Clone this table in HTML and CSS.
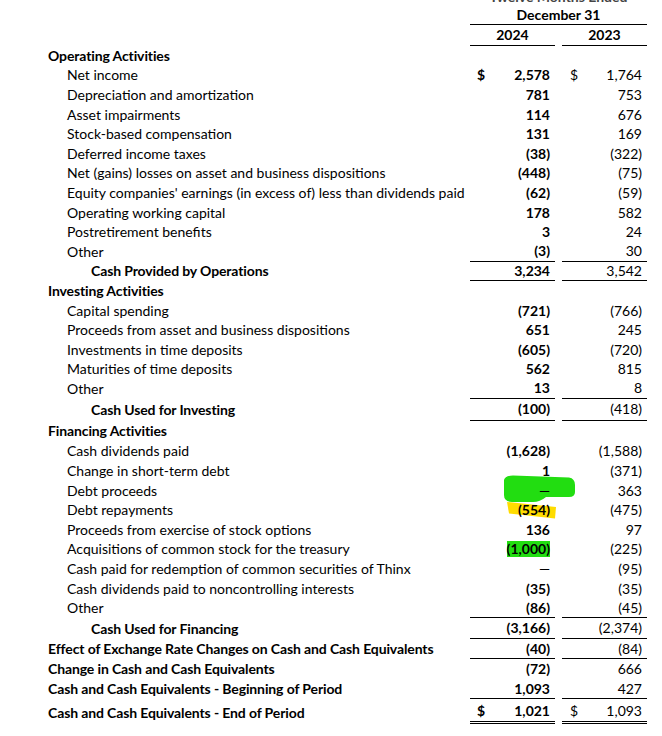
FILE: index.html
```html
<!DOCTYPE html>
<html>
<head>
<meta charset="utf-8">
<link rel="stylesheet" href="styles.css">
</head>
<body>
<svg class="marks" width="662" height="736" viewBox="0 0 662 736">
  <path class="green" d="M504,480 Q505,475.5 513,475.5 L569,477.5 Q575,478.5 575,485 L575,492 Q575,497 569,497 L546,497 Q540,502 533,502 L512,502 Q504,501.5 504,495 Z"/>
  <path class="yellow" d="M507,502 L556,507 L555,518.5 L509,513.5 Z"/>
</svg>
<div class="sheet">
  <div class="row ghost"><div class="lbl"></div><div class="span2"><span class="ghost-text">Twelve Months Ended</span></div></div>
  <div class="row hdr-a"><div class="lbl"></div><div class="span2 head">December 31</div></div>
  <div class="row hdr-b"><div class="lbl"></div><div class="v head">2024</div><div class="v head">2023</div></div>

  <div class="row"><div class="lbl sec">Operating Activities</div><div class="v1"></div><div class="v2"></div></div>
  <div class="row"><div class="lbl item">Net income</div><div class="v1"><span>$</span><span>2,578</span></div><div class="v2"><span>$</span><span>1,764</span></div></div>
  <div class="row"><div class="lbl item">Depreciation and amortization</div><div class="v1"><span>781</span></div><div class="v2"><span>753</span></div></div>
  <div class="row"><div class="lbl item">Asset impairments</div><div class="v1"><span>114</span></div><div class="v2"><span>676</span></div></div>
  <div class="row"><div class="lbl item">Stock-based compensation</div><div class="v1"><span>131</span></div><div class="v2"><span>169</span></div></div>
  <div class="row"><div class="lbl item">Deferred income taxes</div><div class="v1"><span>(38)</span></div><div class="v2"><span>(322)</span></div></div>
  <div class="row"><div class="lbl item">Net (gains) losses on asset and business dispositions</div><div class="v1"><span>(448)</span></div><div class="v2"><span>(75)</span></div></div>
  <div class="row"><div class="lbl item">Equity companies' earnings (in excess of) less than dividends paid</div><div class="v1"><span>(62)</span></div><div class="v2"><span>(59)</span></div></div>
  <div class="row"><div class="lbl item">Operating working capital</div><div class="v1"><span>178</span></div><div class="v2"><span>582</span></div></div>
  <div class="row"><div class="lbl item">Postretirement benefits</div><div class="v1"><span>3</span></div><div class="v2"><span>24</span></div></div>
  <div class="row ruled"><div class="lbl item">Other</div><div class="v1"><span>(3)</span></div><div class="v2"><span>30</span></div></div>
  <div class="row ruled"><div class="lbl sub">Cash Provided by Operations</div><div class="v1"><span>3,234</span></div><div class="v2"><span>3,542</span></div></div>

  <div class="row"><div class="lbl sec">Investing Activities</div><div class="v1"></div><div class="v2"></div></div>
  <div class="row"><div class="lbl item">Capital spending</div><div class="v1"><span>(721)</span></div><div class="v2"><span>(766)</span></div></div>
  <div class="row"><div class="lbl item">Proceeds from asset and business dispositions</div><div class="v1"><span>651</span></div><div class="v2"><span>245</span></div></div>
  <div class="row"><div class="lbl item">Investments in time deposits</div><div class="v1"><span>(605)</span></div><div class="v2"><span>(720)</span></div></div>
  <div class="row"><div class="lbl item">Maturities of time deposits</div><div class="v1"><span>562</span></div><div class="v2"><span>815</span></div></div>
  <div class="row ruled"><div class="lbl item">Other</div><div class="v1"><span>13</span></div><div class="v2"><span>8</span></div></div>
  <div class="row ruled h22"><div class="lbl sub">Cash Used for Investing</div><div class="v1"><span>(100)</span></div><div class="v2"><span>(418)</span></div></div>

  <div class="row h21"><div class="lbl sec">Financing Activities</div><div class="v1"></div><div class="v2"></div></div>
  <div class="row"><div class="lbl item">Cash dividends paid</div><div class="v1"><span>(1,628)</span></div><div class="v2"><span>(1,588)</span></div></div>
  <div class="row"><div class="lbl item">Change in short-term debt</div><div class="v1"><span>1</span></div><div class="v2"><span>(371)</span></div></div>
  <div class="row"><div class="lbl item">Debt proceeds</div><div class="v1"><span class="dash">—</span></div><div class="v2"><span>363</span></div></div>
  <div class="row"><div class="lbl item">Debt repayments</div><div class="v1"><span>(554)</span></div><div class="v2"><span>(475)</span></div></div>
  <div class="row"><div class="lbl item">Proceeds from exercise of stock options</div><div class="v1"><span>136</span></div><div class="v2"><span>97</span></div></div>
  <div class="row"><div class="lbl item">Acquisitions of common stock for the treasury</div><div class="v1"><span class="hl-green">(1,000)</span></div><div class="v2"><span>(225)</span></div></div>
  <div class="row"><div class="lbl item">Cash paid for redemption of common securities of Thinx</div><div class="v1"><span class="dash">—</span></div><div class="v2"><span>(95)</span></div></div>
  <div class="row"><div class="lbl item">Cash dividends paid to noncontrolling interests</div><div class="v1"><span>(35)</span></div><div class="v2"><span>(35)</span></div></div>
  <div class="row ruled"><div class="lbl item">Other</div><div class="v1"><span>(86)</span></div><div class="v2"><span>(45)</span></div></div>
  <div class="row ruled h21"><div class="lbl sub">Cash Used for Financing</div><div class="v1"><span>(3,166)</span></div><div class="v2"><span>(2,374)</span></div></div>
  <div class="row ruled h20"><div class="lbl sec">Effect of Exchange Rate Changes on Cash and Cash Equivalents</div><div class="v1"><span>(40)</span></div><div class="v2"><span>(84)</span></div></div>
  <div class="row h20"><div class="lbl sec">Change in Cash and Cash Equivalents</div><div class="v1"><span>(72)</span></div><div class="v2"><span>666</span></div></div>
  <div class="row ruled h20"><div class="lbl sec">Cash and Cash Equivalents - Beginning of Period</div><div class="v1"><span>1,093</span></div><div class="v2"><span>427</span></div></div>
  <div class="row double"><div class="lbl sec">Cash and Cash Equivalents - End of Period</div><div class="v1"><span>$</span><span>1,021</span></div><div class="v2"><span>$</span><span>1,093</span></div></div>
</div>
</body>
</html>
```

FILE: styles.css
```css
html {
  background: #fff;
}
html, body {
  margin: 0;
  padding: 0;
}
body {
  font-family: Lato, "Liberation Sans", sans-serif;
  font-size: 14px;
  line-height: 16px;
  color: #000;
  width: 662px;
  height: 736px;
  overflow: hidden;
}
.marks {
  position: absolute;
  left: 0;
  top: 0;
  z-index: -1;
}
.green { fill: #22dd11; }
.yellow { fill: #ffdc00; }

.sheet {
  display: flex;
  flex-direction: column;
}
.row {
  display: grid;
  grid-template-columns: 463px 85px 85px;
  column-gap: 7px;
  height: 19.6px;
  box-sizing: border-box;
}
.row.h20 { height: 20px; }
.row.h21 { height: 21px; }
.row.h22 { height: 22px; }

.lbl {
  display: flex;
  align-items: center;
  white-space: nowrap;
}
.sec { padding-left: 48px; font-weight: 700; letter-spacing: -0.12px; }
.item { padding-left: 67px; }
.sub { padding-left: 91px; font-weight: 700; letter-spacing: -0.12px; }

.v1, .v2 {
  display: flex;
  align-items: center;
  justify-content: space-between;
  box-sizing: border-box;
  white-space: nowrap;
}
.v1 { padding: 0 5px 0 7px; font-weight: 700; }
.v2 { padding: 0 5px 0 8px; }
.v1 span:only-child, .v2 span:only-child { margin-left: auto; }

.ruled .v1, .ruled .v2 { border-bottom: 1px solid #000; }
.double { height: 25px; }
.double .lbl, .double .v1, .double .v2 { padding-top: 2px; }
.double .v1, .double .v2 { border-bottom: 3px double #000; }

.dash { font-weight: 400; }
.hl-green { background: #22dd11; }

/* header */
.ghost { height: 3px; overflow: hidden; }
.ghost .span2 { grid-column: 2 / 4; text-align: center; }
.ghost-text { display: block; margin-top: -11.5px; font-weight: 700; color: #444; }
.hdr-a { height: 22px; }
.span2 {
  grid-column: 2 / 4;
}
.head {
  display: flex;
  align-items: center;
  justify-content: center;
  font-weight: 700;
  border-bottom: 1px solid #000;
  box-sizing: border-box;
}
.hdr-a .head { padding-top: 2px; }
.hdr-b { height: 21px; }
```
